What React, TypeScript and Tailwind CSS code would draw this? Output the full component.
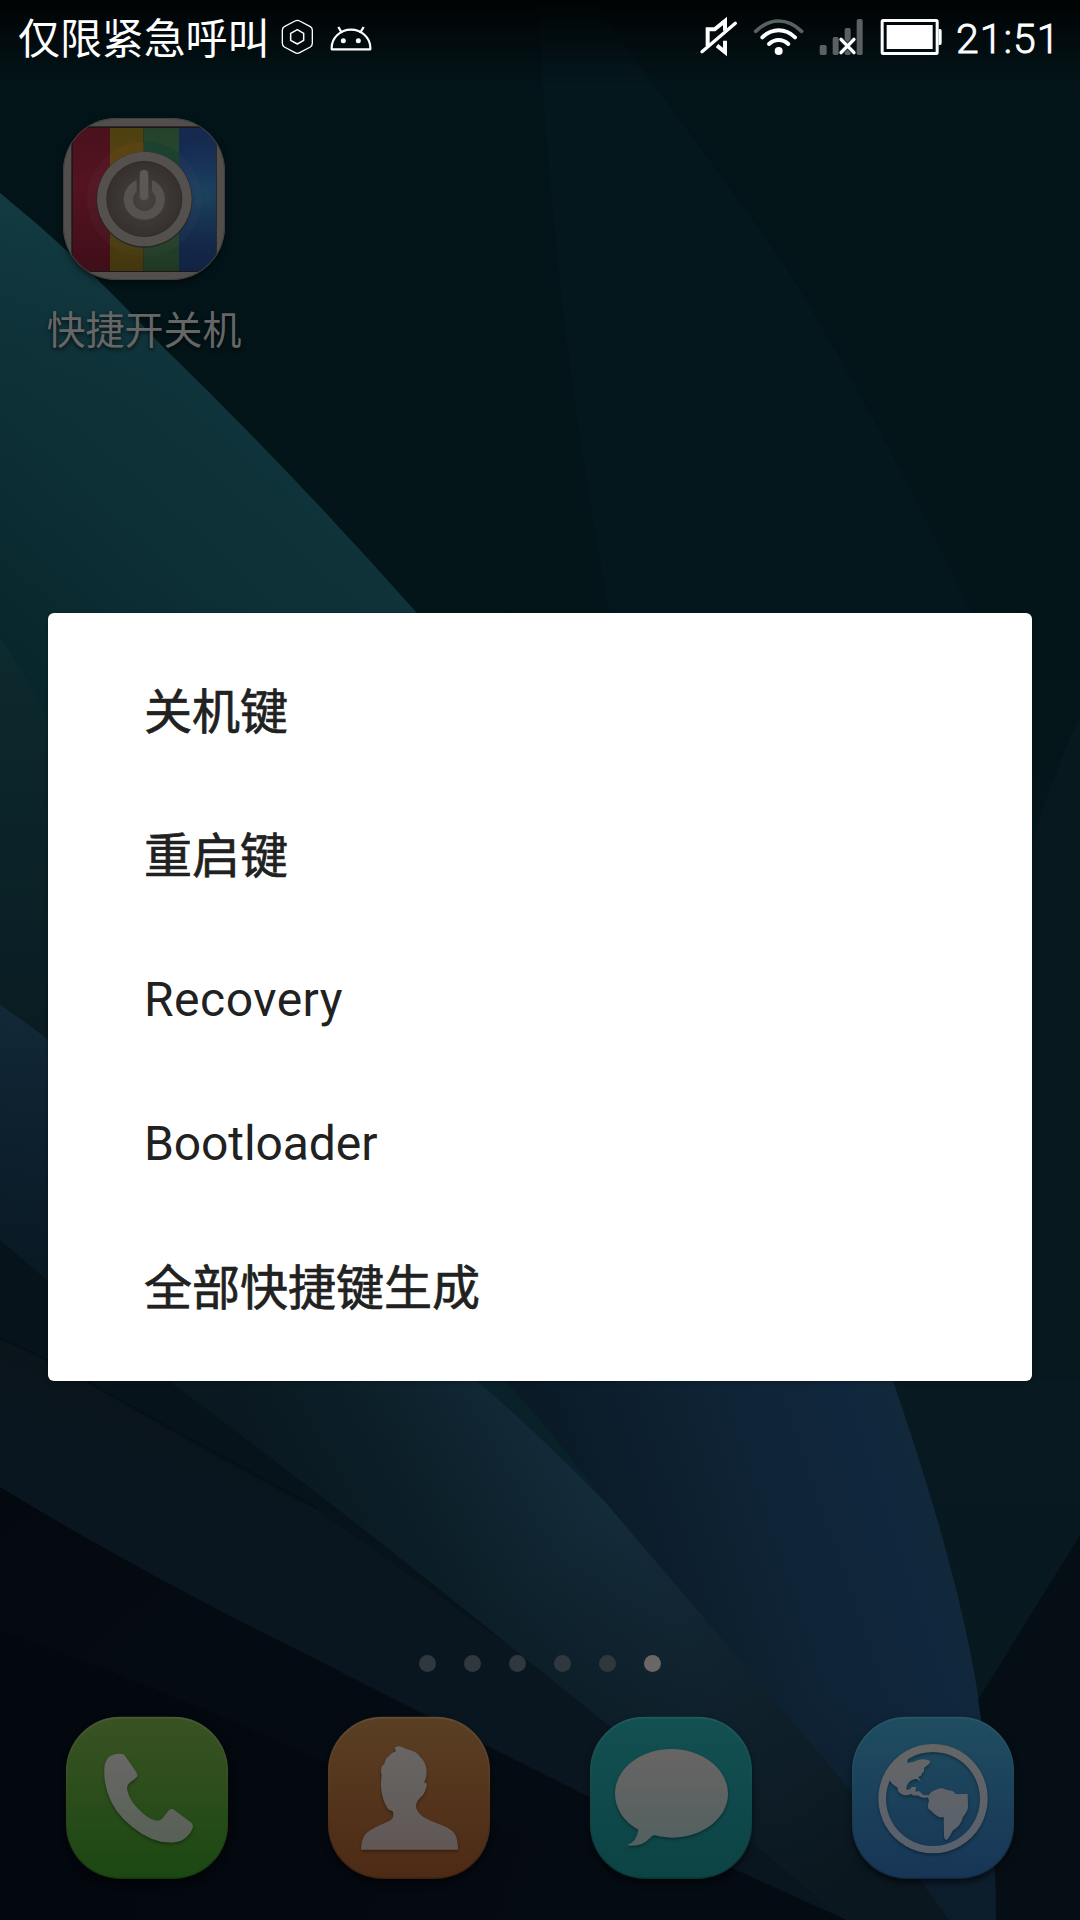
import React from 'react';

const CJK = "font-['Roboto','Noto_Sans_CJK_SC',sans-serif]";

function Wallpaper() {
  return (
    <svg className="absolute inset-0 h-full w-full" viewBox="0 0 1080 1920" preserveAspectRatio="none">
      <defs>
        <linearGradient id="base" x1="0" y1="0" x2="0" y2="1">
          <stop offset="0" stopColor="#031419" />
          <stop offset="0.35" stopColor="#031518" />
          <stop offset="0.7" stopColor="#091b23" />
          <stop offset="1" stopColor="#060d14" />
        </linearGradient>
        <linearGradient id="teal" gradientUnits="userSpaceOnUse" x1="250" y1="410" x2="-10" y2="700">
          <stop offset="0" stopColor="#10343b" />
          <stop offset="0.4" stopColor="#0d2f36" />
          <stop offset="1" stopColor="#07252a" />
        </linearGradient>
        <linearGradient id="tealTop" gradientUnits="userSpaceOnUse" x1="0" y1="193" x2="0" y2="420">
          <stop offset="0" stopColor="#15454a" stopOpacity="0.4" />
          <stop offset="1" stopColor="#10343b" stopOpacity="0" />
        </linearGradient>
        <linearGradient id="green" gradientUnits="userSpaceOnUse" x1="0" y1="640" x2="0" y2="1040">
          <stop offset="0" stopColor="#0d2a2e" />
          <stop offset="1" stopColor="#091c22" />
        </linearGradient>
        <linearGradient id="leftBlue" gradientUnits="userSpaceOnUse" x1="40" y1="1005" x2="0" y2="1260">
          <stop offset="0" stopColor="#122938" />
          <stop offset="0.5" stopColor="#0d202e" />
          <stop offset="1" stopColor="#0a1a25" />
        </linearGradient>
        <linearGradient id="lower" gradientUnits="userSpaceOnUse" x1="60" y1="1370" x2="20" y2="1490">
          <stop offset="0" stopColor="#0a141b" />
          <stop offset="0.6" stopColor="#09161f" />
          <stop offset="1" stopColor="#0a161f" />
        </linearGradient>
        <linearGradient id="bandB" gradientUnits="userSpaceOnUse" x1="290" y1="1540" x2="545" y2="1395">
          <stop offset="0" stopColor="#0a1820" />
          <stop offset="0.4" stopColor="#0b1e27" />
          <stop offset="1" stopColor="#142b3a" />
        </linearGradient>
        <linearGradient id="bandFade" gradientUnits="userSpaceOnUse" x1="600" y1="1520" x2="850" y2="1880">
          <stop offset="0" stopColor="#0a151c" stopOpacity="0" />
          <stop offset="1" stopColor="#0a151c" stopOpacity="0.9" />
        </linearGradient>
        <linearGradient id="blue" gradientUnits="userSpaceOnUse" x1="590" y1="1560" x2="940" y2="1440">
          <stop offset="0" stopColor="#0a1a27" />
          <stop offset="0.5" stopColor="#0f2436" />
          <stop offset="0.8" stopColor="#10263c" />
          <stop offset="1" stopColor="#122a3a" />
        </linearGradient>
        <linearGradient id="blueFade" gradientUnits="userSpaceOnUse" x1="0" y1="1700" x2="0" y2="1920">
          <stop offset="0" stopColor="#0b1c29" stopOpacity="0" />
          <stop offset="1" stopColor="#0b1c29" stopOpacity="0.9" />
        </linearGradient>
        <linearGradient id="right" gradientUnits="userSpaceOnUse" x1="1000" y1="1000" x2="1000" y2="1700">
          <stop offset="0" stopColor="#081a24" />
          <stop offset="1" stopColor="#08181f" />
        </linearGradient>
        <linearGradient id="dark" gradientUnits="userSpaceOnUse" x1="0" y1="1487" x2="400" y2="1920">
          <stop offset="0" stopColor="#04080f" />
          <stop offset="0.4" stopColor="#050b12" />
          <stop offset="1" stopColor="#050b12" />
        </linearGradient>
        <linearGradient id="deep" gradientUnits="userSpaceOnUse" x1="200" y1="1700" x2="600" y2="1850">
          <stop offset="0" stopColor="#03070e" />
          <stop offset="1" stopColor="#050b12" />
        </linearGradient>
        <linearGradient id="statusShade" x1="0" y1="0" x2="0" y2="1">
          <stop offset="0" stopColor="#000" stopOpacity="0.85" />
          <stop offset="1" stopColor="#000" stopOpacity="0" />
        </linearGradient>
      </defs>
      <rect width="1080" height="1920" fill="url(#base)" />
      <path d="M538 0 H590 Q700 145 785 265 Q880 420 971 612 L1040 830 L1060 1000 L700 1000 Q560 500 538 0Z" fill="#04171d" />
      <path d="M1080 716 Q1050 780 1030 850 L1000 1400 H1080Z" fill="#08181f" />
      <path d="M0 193 Q85 262 159 343 Q290 470 416 612 L560 800 V1100 H0Z" fill="url(#teal)" />
      <path d="M0 193 Q85 262 159 343 L240 425 H0Z" fill="url(#tealTop)" />
      <path d="M0 637 Q26 675 48 720 L200 1100 H0Z" fill="url(#green)" />
      <path d="M0 1005 Q26 1022 48 1040 L400 1390 L0 1500Z" fill="url(#leftBlue)" />
      <path d="M0 1240 L48 1281 L169 1381 H1080 V1920 H0Z" fill="#07131a" />
      <path d="M0 1338 Q45 1358 86 1381 Q200 1452 317 1510 L510 1646 L900 1920 H0Z" fill="url(#lower)" />
      <path d="M0 1338 Q45 1358 86 1381 Q200 1445 317 1508" stroke="#060f15" strokeWidth="1.5" fill="none" />
      <path d="M893 1381 H1080 V1760 H975Z" fill="url(#right)" />
      <path d="M477 1381 H520 L620 1515 L600 1500Z" fill="#09222a" />
      <path d="M505 1381 H893 Q965 1590 981 1717 Q996 1800 996 1920 H900 L750 1674 L606 1503 Q550 1430 505 1381Z" fill="url(#blue)" />
      <path d="M800 1700 H981 Q996 1800 996 1920 H880Z" fill="url(#blueFade)" />
      <path d="M169 1381 H477 Q545 1440 606 1503 Q682 1592 751 1674 Q860 1796 950 1920 H847 Q690 1790 510 1646 Q330 1500 169 1381Z" fill="url(#bandB)" />
      <path d="M477 1503 H606 Q682 1592 751 1674 Q860 1796 950 1920 H847 Q690 1790 510 1646Z" fill="url(#bandFade)" />
      <path d="M1080 1535 L978 1700 Q996 1800 996 1920 H1080Z" fill="#060e15" />
      <path d="M0 1487 Q140 1572 296 1649 Q500 1753 730 1867 L847 1920 H0Z" fill="url(#dark)" />
      <path d="M0 1630 Q172 1692 327 1763 Q450 1810 578 1849 L760 1920 H0Z" fill="url(#deep)" />
      <rect width="1080" height="85" fill="url(#statusShade)" />
    </svg>
  );
}

function StatusBar() {
  return (
    <header className="relative flex h-[75px] items-center justify-between pl-[18px] pr-[24px] text-white">
      <div className="flex items-center">
        <span className="pt-[3px] text-[42px] leading-[75px] tracking-[-0.1px]">仅限紧急呼叫</span>
        <svg className="ml-[11px] h-[75px] w-[100px]" viewBox="840 0 300 225" fill="none" stroke="#fff">
          <path d="M885 63 Q892 59 899 63 L931 80 Q937 84 937 91 V130 Q937 137 931 141 L899 158 Q892 162 885 158 L853 141 Q847 137 847 130 V91 Q847 84 853 80Z" strokeWidth="4" />
          <path d="M892 89 L911 100 V121 L892 132 L872 121 V100Z" strokeWidth="4.5" strokeLinejoin="round" />
          <path d="M995 148 V143 A58 54 0 0 1 1111 143 V148Z" strokeWidth="6.5" strokeLinejoin="round" />
          <path d="M1015 81 L1026 99 M1091 81 L1080 99" strokeWidth="7" />
          <circle cx="1030" cy="122" r="7.5" fill="#fff" stroke="none" />
          <circle cx="1075" cy="122" r="7.5" fill="#fff" stroke="none" />
        </svg>
      </div>
      <div className="flex items-center">
        <svg className="h-[75px] w-[250px]" viewBox="55 0 750 225" fill="none" stroke="#fff">
          <path d="M84 138 V88 H105 L136 63 V92 M136 122 V156 L112 137" strokeWidth="12" />
          <path d="M67 155 L167 70" strokeWidth="10" strokeLinecap="round" />
          <path d="M228 94 Q260 63 297 63 Q334 63 366 94" stroke="#5a6163" strokeWidth="11" strokeLinecap="round" />
          <path d="M248 112 Q270 91 297 91 Q324 91 346 112" strokeWidth="12" strokeLinecap="round" />
          <path d="M268 132 Q281 120 297 120 Q313 120 326 132" strokeWidth="12" strokeLinecap="round" />
          <circle cx="297" cy="153" r="12" fill="#fff" stroke="none" />
          <g fill="#5a6163" stroke="none">
            <rect x="420" y="135" width="21" height="30" rx="5" />
            <rect x="459" y="111" width="18" height="54" rx="5" />
            <rect x="495" y="84" width="18" height="81" rx="5" />
            <rect x="531" y="57" width="18" height="108" rx="5" />
          </g>
          <path d="M484 118 L523 158 M523 118 L484 158" stroke="#1b2629" strokeWidth="15" />
          <path d="M484 118 L523 158 M523 118 L484 158" strokeWidth="10" strokeLinecap="round" />
          <rect x="607.500" y="61.500" width="165" height="99" rx="3" strokeWidth="9" />
          <path d="M621 75 H759 V147 H621Z M777 87 H781 Q786 87 786 92 V129 Q786 135 781 135 H777Z" fill="#fff" stroke="none" />
        </svg>
        <span className="ml-[8px] w-[100px] whitespace-nowrap pt-[3px] font-['Roboto'] text-[41px] font-light leading-[75px] tracking-[1px] [-webkit-text-stroke:0.8px_white]">21:51</span>
      </div>
    </header>
  );
}

function ShortcutIcon() {
  return (
    <svg className="h-[162px] w-[162px] overflow-visible drop-shadow-[0_3px_3px_rgba(0,0,0,0.5)]" viewBox="99 54 486 486">
      <defs>
        <clipPath id="tile"><rect x="99" y="54" width="486" height="486" rx="160" /></clipPath>
        <radialGradient id="knob"><stop offset="0" stopColor="#48433f" /><stop offset="1" stopColor="#35302d" /></radialGradient>
        <linearGradient id="stripeShade" x1="0" y1="0" x2="0" y2="1">
          <stop offset="0" stopColor="#000" stopOpacity="0.12" />
          <stop offset="0.4" stopColor="#000" stopOpacity="0" />
          <stop offset="1" stopColor="#000" stopOpacity="0.25" />
        </linearGradient>
        <radialGradient id="cyan" gradientUnits="userSpaceOnUse" cx="530" cy="290" r="170">
          <stop offset="0" stopColor="#1b4a60" stopOpacity="0.8" /><stop offset="1" stopColor="#1c3a60" stopOpacity="0" />
        </radialGradient>
      </defs>
      <g clipPath="url(#tile)">
        <rect x="99" y="54" width="486" height="486" fill="#524e4c" />
        <rect x="124" y="79" width="436" height="437" fill="#1c1718" />
        <path d="M129 84H240V513H129Z" fill="#541320" />
        <path d="M240 84H340V513H240Z" fill="#594812" />
        <path d="M340 84H447V513H340Z" fill="#294b31" />
        <path d="M447 84H558V513H447Z" fill="#182f58" />
        <path d="M447 84H558V513H447Z" fill="url(#cyan)" />
        <path d="M129 84H558V513H129Z" fill="url(#stripeShade)" />
        <path d="M340 125 A172 172 0 0 1 447 160 V300 H340Z" fill="#173f2b" />
        <path d="M340 125 A172 172 0 0 0 240 160 V300 H340Z" fill="#5a400e" />
        <circle cx="343" cy="298" r="172" fill="#777" opacity="0.06" />
      </g>
      <rect x="100.500" y="55.500" width="483" height="483" rx="158" fill="none" stroke="#3e4140" strokeWidth="3" />
      <circle cx="343" cy="299" r="144" fill="#262321" />
      <circle cx="343" cy="297" r="142" fill="#54504d" />
      <circle cx="343" cy="297" r="113" fill="url(#knob)" stroke="#2b2826" strokeWidth="2" />
      <path d="M320 240 A62 62 0 1 0 366 240 V274 A34 34 0 1 1 320 274Z" fill="#55524f" />
      <rect x="329" y="210" width="26" height="90" rx="12" fill="#5b5855" />
    </svg>
  );
}

function Dialog() {
  const items = [
    { text: '关机键', style: 'pt-[2px] [-webkit-text-stroke:0.7px_#212121]' },
    { text: '重启键', style: 'pt-[2px] [-webkit-text-stroke:0.7px_#212121]' },
    { text: 'Recovery', style: 'tracking-[0.5px]' },
    { text: 'Bootloader', style: 'tracking-[-0.1px]' },
    { text: '全部快捷键生成', style: 'pt-[2px] [-webkit-text-stroke:0.7px_#212121]' },
  ];
  return (
    <ul className="absolute left-[48px] top-[613px] flex w-[984px] flex-col rounded-[6px] bg-white py-6 text-[#212121] shadow-[0_1px_4px_rgba(0,0,0,0.3)]">
      {items.map(({ text, style }) => (
        <li key={text} className="flex h-36 items-center pl-24 pt-[6px] text-[48px] leading-none">
          <span className={style}>{text}</span>
        </li>
      ))}
    </ul>
  );
}

type TileProps = { id: string; x: number; top: string; bottom: string; g1: string; g2: string; edge: string; children: React.ReactNode };

function Tile({ id, x, top, bottom, g1, g2, edge, children }: TileProps) {
  return (
    <svg className="h-[162px] w-[162px] overflow-visible drop-shadow-[0_4px_3px_rgba(0,0,0,0.55)]" viewBox={`${x} 51 486 486`}>
      <defs>
        <linearGradient id={id} x1="0" y1="0" x2="0" y2="1">
          <stop offset="0" stopColor={top} /><stop offset="1" stopColor={bottom} />
        </linearGradient>
        <linearGradient id={`${id}-glyph`} gradientUnits="userSpaceOnUse" x1="0" y1="150" x2="0" y2="450">
          <stop offset="0" stopColor={g1} /><stop offset="1" stopColor={g2} />
        </linearGradient>
        <linearGradient id={`${id}-edge`} x1="0" y1="0" x2="0" y2="1">
          <stop offset="0" stopColor={edge} stopOpacity="0.8" /><stop offset="0.35" stopColor={edge} stopOpacity="0.2" />
          <stop offset="1" stopColor="#000" stopOpacity="0.25" />
        </linearGradient>
      </defs>
      <rect x={x} y="51" width="486" height="486" rx="163" fill={`url(#${id})`} />
      <rect x={x + 2} y="53" width="482" height="482" rx="161" fill="none" stroke={`url(#${id}-edge)`} strokeWidth="5" />
      <g className="drop-shadow-[0_5px_4px_rgba(0,0,0,0.35)]" fill={`url(#${id}-glyph)`}>{children}</g>
    </svg>
  );
}

function Dock() {
  return (
    <nav className="flex justify-between pl-[66px] pr-[66px]">
      <Tile id="phone" x={48} top="#3a5223" bottom="#1b4812" g1="#696767" g2="#566054" edge="#4d5d38">
        <path d="M180 168 Q198 159 218 162 Q222 163 226 169 L259 217 Q266 227 257 235 L238 249 Q229 256 232 271 Q239 307 280 341 Q304 361 322 362 Q334 361 341 350 Q350 338 358 329 Q365 324 374 331 L422 367 Q431 373 428 384 Q421 405 399 419 Q375 432 333 425 Q276 413 220 357 Q175 309 165 247 Q162 226 163 202 Q166 178 180 168Z" />
      </Tile>
      <Tile id="contacts" x={54} top="#5a3f23" bottom="#4d2a15" g1="#676563" g2="#605755" edge="#65503a">
        <path d="M153 449 Q154 414 169 400 Q183 386 231 366 Q249 358 250 347 L249 335 Q245 331 237 330 Q223 314 216 282 Q210 257 215 228 L213 212 Q214 196 223 192 Q225 176 237 168 Q245 158 258 154 L254 143 Q262 137 275 140 L290 147 Q322 155 331 171 Q349 188 350 214 Q350 235 342 247 Q351 247 350 257 Q345 282 332 292 Q319 304 318 319 Q319 336 339 350 Q355 360 378 369 Q421 383 434 401 Q444 417 444 449Z" />
      </Tile>
      <Tile id="messages" x={60} top="#135052" bottom="#0c4345" g1="#676564" g2="#51605f" edge="#245c61">
        <path d="M304 147 C397 147 474 207 474 281 C474 354 397 413 304 413 Q276 412 257 406 Q247 405 241 413 Q214 443 170 436 Q201 425 205 389 C162 366 135 325 135 281 C135 207 211 147 304 147Z" />
      </Tile>
      <Tile id="browser" x={51} top="#1f4d60" bottom="#173556" g1="#656566" g2="#57606c" edge="#2a5868">
        <path fillRule="evenodd" d="M294 132 A164 164 0 1 0 294.100 132Z M294 156 A141 141 0 1 1 293.900 156Z" />
        <path d="M160 240 Q182 194 218 174 L217 188 Q232 189 247 181 Q264 174 284 182 Q288 185 281 193 L268 203 Q267 210 266 216 Q258 220 260 226 L250 231 L259 246 L246 237 Q233 235 221 248 Q213 258 214 268 Q222 273 231 261 L243 261 L242 275 L252 273 L265 285 L282 286 Q286 274 303 269 Q320 261 332 269 L353 273 L363 282 L398 282 L399 322 Q397 336 384 351 Q378 378 353 392 Q340 418 334 420 Q327 419 327 406 L326 351 Q314 356 299 343 L279 325 Q278 311 282 302 L279 292 Q262 297 248 286 Q235 289 228 282 Q211 290 198 281 Q188 276 188 263 Q171 255 162 238Z" />
      </Tile>
    </nav>
  );
}

export default function App() {
  return (
    <main className={`relative flex h-[1920px] w-[1080px] flex-col overflow-hidden bg-[#031216] ${CJK}`}>
      <Wallpaper />
      <StatusBar />
      <section className="relative flex flex-1 flex-col pt-[43px]">
        <div className="ml-[44px] flex w-[200px] flex-col items-center">
          <ShortcutIcon />
          <span className="mt-[21px] whitespace-nowrap text-[39px] leading-[60px] text-[#666] [text-shadow:0_2px_4px_rgba(0,0,0,0.7)]">快捷开关机</span>
        </div>
      </section>
      <footer className="relative flex h-[265px] flex-col">
        <div className="mb-[45px] flex justify-center gap-[28px]">
          {[0, 1, 2, 3, 4].map((i) => <i key={i} className="h-[17px] w-[17px] rounded-full bg-[#30383f]" />)}
          <i className="h-[17px] w-[17px] rounded-full bg-[#696665]" />
        </div>
        <Dock />
      </footer>
      <Dialog />
    </main>
  );
}
